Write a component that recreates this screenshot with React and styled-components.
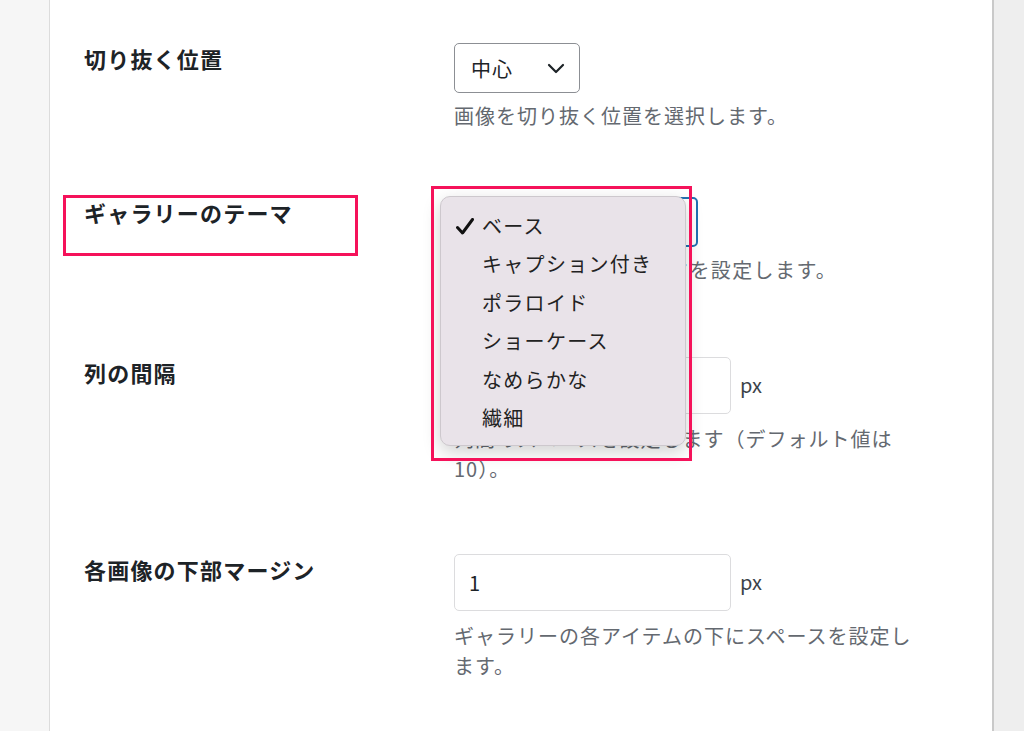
import React from "react";
import styled, { createGlobalStyle } from "styled-components";

const Global = createGlobalStyle`
  html, body { margin: 0; padding: 0; }
  body {
    font-family: "Noto Sans CJK JP", "Noto Sans", sans-serif;
    background: #eeeeee;
    color: #1d2327;
  }
`;

const Page = styled.div`
  display: flex;
  width: 1024px;
  height: 731px;
  overflow: hidden;
`;

const LeftGutter = styled.div`
  width: 49px;
  flex: none;
  background: #f6f6f6;
  border-right: 1px solid #dcdcdc;
`;

const RightGutter = styled.div`
  flex: 1;
  background: #eeeeee;
  border-left: 2px solid #c9c9c9;
`;

const Panel = styled.div`
  width: 942px;
  flex: none;
  background: #fff;
  padding: 43px 0 0 34px;
  box-sizing: border-box;
`;

const Row = styled.div`
  display: grid;
  grid-template-columns: 370px 470px;
  padding-bottom: ${(p) => p.$after}px;
`;

const Label = styled.div`
  position: relative;
  margin-top: 0;
  font-size: 22px;
  line-height: 30px;
  font-weight: 700;
  letter-spacing: 1.2px;
  color: #1d2327;
  align-self: start;
`;

const Field = styled.div`
  display: flex;
  flex-direction: column;
  align-items: flex-start;
`;

const ControlWrap = styled.div`
  position: relative;
  display: flex;
  align-items: center;
  gap: 9px;
`;

const Select = styled.div`
  box-sizing: border-box;
  width: ${(p) => p.$w}px;
  height: 50px;
  display: flex;
  align-items: center;
  justify-content: space-between;
  padding: 0 14px 0 16px;
  border: ${(p) => (p.$focus ? "2px solid #2271b1" : "1px solid #8c8f94")};
  border-radius: 5px;
  background: #fff;
  font-size: 20px;
  letter-spacing: 1px;
  color: #1d2327;
`;

const Input = styled.div`
  box-sizing: border-box;
  width: 277px;
  height: 57px;
  display: flex;
  align-items: center;
  padding: 0 14px;
  border: 1px solid #dcdcde;
  border-radius: 5px;
  background: #fff;
  font-size: 20px;
  color: #1d2327;
`;

const Unit = styled.span`
  font-size: 20px;
  color: #3c434a;
  margin-top: -2px;
`;

const Desc = styled.p`
  margin: ${(p) => p.$mt}px 0 0;
  width: 470px;
  font-size: 20px;
  line-height: 30px;
  letter-spacing: ${(p) => p.$ls || 1}px;
  color: #646970;
`;

const Menu = styled.ul`
  position: absolute;
  left: -14px;
  top: -1px;
  z-index: 10;
  width: 246px;
  box-sizing: border-box;
  margin: 0;
  padding: 10px 0 8px;
  list-style: none;
  background: #e9e3e9;
  border: 1px solid #cdc8cd;
  border-radius: 10px;
  box-shadow: 0 6px 18px rgba(0, 0, 0, 0.18);
`;

const MenuItem = styled.li`
  position: relative;
  height: 38.4px;
  line-height: 38.4px;
  padding-left: 41px;
  font-size: 20px;
  letter-spacing: 1.3px;
  color: #222;
  white-space: nowrap;
`;

const Check = styled.svg`
  position: absolute;
  left: 15px;
  top: 11px;
`;

const Highlight = styled.div`
  position: absolute;
  z-index: 11;
  left: ${(p) => p.$l}px;
  top: ${(p) => p.$t}px;
  width: ${(p) => p.$w}px;
  height: ${(p) => p.$h}px;
  box-sizing: border-box;
  border: 3px solid #f5125a;
  pointer-events: none;
`;

const Chevron = () => (
  <svg width="18" height="11" viewBox="0 0 18 11">
    <path d="M2 2 L9 9 L16 2" fill="none" stroke="#1d2327" strokeWidth="2.2" strokeLinecap="round" strokeLinejoin="round" />
  </svg>
);

const themes = ["ベース", "キャプション付き", "ポラロイド", "ショーケース", "なめらかな", "繊細"];

export default function App() {
  return (
    <>
      <Global />
      <Page>
        <LeftGutter />
        <Panel>
          <Row $after={66}>
            <Label>切り抜く位置</Label>
            <Field>
              <Select $w={126}>
                <span>中心</span>
                <Chevron />
              </Select>
              <Desc $mt={8}>画像を切り抜く位置を選択します。</Desc>
            </Field>
          </Row>

          <Row $after={72}>
            <Label>
              ギャラリーのテーマ
              <Highlight $l={-21} $t={-2} $w={295} $h={61} />
            </Label>
            <Field>
              <ControlWrap>
                <Select $w={244} $focus>
                  <span>ベース</span>
                  <Chevron />
                </Select>
                <Menu>
                  {themes.map((t, i) => (
                    <MenuItem key={t}>
                      {i === 0 && (
                        <Check width="18" height="17" viewBox="0 0 18 17">
                          <path d="M1.5 9.5 L6.5 15 L16.5 1.5" fill="none" stroke="#111" strokeWidth="3" strokeLinecap="round" strokeLinejoin="round" />
                        </Check>
                      )}
                      {t}
                    </MenuItem>
                  ))}
                </Menu>
                <Highlight $l={-23} $t={-11} $w={261} $h={275} />
              </ControlWrap>
              <Desc $mt={8} $ls={1.4}>ギャラリーの表示テーマを設定します。</Desc>
            </Field>
          </Row>

          <Row $after={70}>
            <Label>列の間隔</Label>
            <Field>
              <ControlWrap>
                <Input />
                <Unit>px</Unit>
              </ControlWrap>
              <Desc $mt={10}>列間のスペースを設定します（デフォルト値は10）。</Desc>
            </Field>
          </Row>

          <Row $after={0}>
            <Label>各画像の下部マージン</Label>
            <Field>
              <ControlWrap>
                <Input>1</Input>
                <Unit>px</Unit>
              </ControlWrap>
              <Desc $mt={10}>ギャラリーの各アイテムの下にスペースを設定します。</Desc>
            </Field>
          </Row>
        </Panel>
        <RightGutter />
      </Page>
    </>
  );
}
